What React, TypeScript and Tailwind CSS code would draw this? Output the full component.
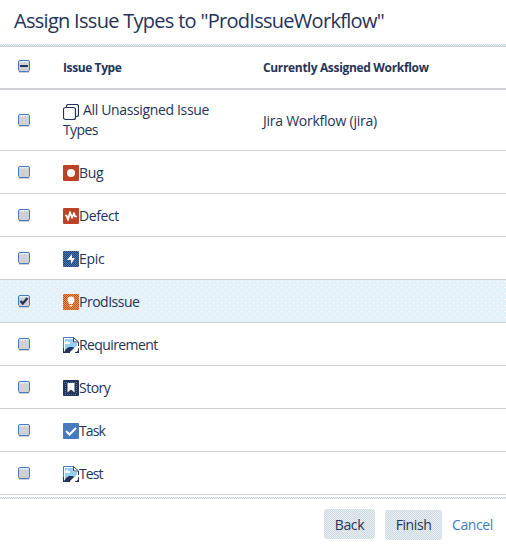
import type { ReactNode } from "react";

type CheckState = "off" | "on" | "mixed";

function Check({ state = "off" }: { state?: CheckState }) {
  return (
    <svg width="12" height="13" viewBox="0 0 12 13" className="block shrink-0" role="checkbox" aria-checked={state === "mixed" ? "mixed" : state === "on"}>
      <rect x="0.5" y="0.5" width="11" height="11" rx="1.5" fill="#cfd0d5" stroke="#467bbd" />
      <path d="M1.5 1.5h9M3 2.5h1M5 2.5h1M8 2.5h1" stroke="#e0f0f8" />
      <path d="M1 12.5h10" stroke="#cfd0d5" />
      <path d="M0 10.5h1M11 10.5h1" stroke="#e9a06a" />
      {state === "mixed" && <rect x="2" y="5" width="8" height="2" fill="#253358" />}
      {state === "on" && <path d="M2.5 6l2.3 2.5L9.5 3" fill="none" stroke="#253358" strokeWidth="2.4" />}
    </svg>
  );
}

function Tile({ fill, dots, children }: { fill: string; dots?: string; children: ReactNode }) {
  const id = "p" + fill.slice(1);
  return (
    <svg width="16" height="16" viewBox="0 0 16 16" className="block shrink-0">
      <defs>
        <pattern id={id} width="2" height="2" patternUnits="userSpaceOnUse">
          <rect width="2" height="2" fill={fill} />
          {dots && <path d="M0 0h1v1H0zM1 1h1v1H1z" fill={dots} />}
        </pattern>
      </defs>
      <rect width="16" height="16" rx="1" fill={dots ? `url(#${id})` : fill} />
      {children}
    </svg>
  );
}

const bug = <Tile fill="#bd4124"><circle cx="8" cy="8" r="4" fill="#fff" /></Tile>;
const defect = (
  <Tile fill="#be4225">
    <path d="M2 7.5h1.5L5 12l2-8 2 6 2-5 1 3.5h2" fill="none" stroke="#fff" strokeWidth="1.7" strokeLinejoin="round" />
  </Tile>
);
const epic = (
  <Tile fill="#253f70" dots="#467bbd"><path d="M9 3L4 9h4v4l4-6H9z" fill="#fff" /></Tile>
);
const prod = (
  <Tile fill="#c4501f" dots="#f0924c">
    <circle cx="8" cy="6" r="3.4" fill="#fff" />
    <path d="M6 8h4v2H6zM6.5 11h3v1h-1v1h-1v-1h-1z" fill="#fff" />
  </Tile>
);
const story = (
  <Tile fill="#253358">
    <path d="M1 2.5h14M2 14.5h12M2.5 4v10M13.5 4v10" stroke="#467bbd" strokeDasharray="1 1" />
    <path d="M4.5 3h7v9.5L8 9.5l-3.5 3z" fill="#fff" />
  </Tile>
);
const task = (
  <Tile fill="#467bbd"><path d="M3 8l3.5 3.5L13 5" fill="none" stroke="#fff" strokeWidth="2" /></Tile>
);
const broken = (
  <svg width="16" height="16" viewBox="0 0 16 16" className="block shrink-0">
    <path d="M0.5 0.5h10.5l4.5 4.5v10.5H0.5z" fill="#fff" />
    <path d="M2 2h8v4h4v3l-5 5H2z" fill="#94d0f3" />
    <path d="M2 7V5h1V4h2v1h2v2z" fill="#fff" />
    <path d="M1 15l2-3 3-2h4l1 1-4 4z" fill="#253358" />
    <path d="M0.5 16V0.5H11" fill="none" stroke="#467bbd" />
    <path d="M0.5 16v-5M0 15.5h7M15.5 10v6M12 15.5h4M15.5 5v4" fill="none" stroke="#253358" />
    <path d="M10.5 0.5v4.5h5z" fill="#fff" stroke="#34466f" />
    <path d="M8.5 15.5l7-6" stroke="#fff" strokeWidth="2.5" />
    <path d="M13 15.5h3v-3z" fill="#253358" />
  </svg>
);

const rows: { name: string; icon: ReactNode; checked?: boolean; tracking: string }[] = [
  { name: "Bug", icon: bug, tracking: "tracking-[-0.3px]" },
  { name: "Defect", icon: defect, tracking: "tracking-[-0.4px]" },
  { name: "Epic", icon: epic, tracking: "tracking-[-0.3px]" },
  { name: "ProdIssue", icon: prod, checked: true, tracking: "tracking-[-0.5px]" },
  { name: "Requirement", icon: broken, tracking: "tracking-[-0.6px]" },
  { name: "Story", icon: story, tracking: "tracking-[-0.5px]" },
  { name: "Task", icon: task, tracking: "tracking-[-0.9px]" },
  { name: "Test", icon: broken, tracking: "tracking-[-0.9px]" },
];

function Hatch({ height }: { height: string }) {
  return <div className={`${height} bg-[#dbe6ec] bg-[repeating-conic-gradient(#c9d2d9_0_25%,#e7f2f7_0_50%)] bg-size-[2px_2px]`} />;
}

export default function App() {
  return (
    <main className="h-[548px] w-[506px] overflow-hidden bg-white font-['Open_Sans','Noto_Sans',sans-serif] text-sm text-[#253358]">
      <h1 className="h-11 pt-[6px] pl-[14px] text-xl leading-[30px] tracking-[-0.71px] whitespace-nowrap">
        Assign Issue Types to "ProdIssueWorkflow"
      </h1>
      <Hatch height="h-[2px]" />
      <div className="h-px bg-[#cfd0d5]" />
      <div className="flex h-[43px] border-b-2 border-[#cfd0d5] pl-[18px] text-xs leading-[18px] font-bold">
        <div className="w-[45px] pt-[13px]"><Check state="mixed" /></div>
        <div className="w-[200px] pt-3 tracking-[-0.4px]">Issue Type</div>
        <div className="pt-3 tracking-[-0.33px]">Currently Assigned Workflow</div>
      </div>
      <div className="flex h-[61px] border-b border-[#cfd0d5] pl-[18px] leading-5">
        <div className="w-[45px] pt-6"><Check /></div>
        <div className="w-[200px] pt-[10px] tracking-[-0.35px]">
          <div className="flex h-5">
            <svg width="16" height="17" viewBox="0 0 16 17" className="mt-1 mr-1 shrink-0" fill="none" stroke="#253358" strokeWidth="1.2">
              <rect x="0.5" y="3.5" width="12" height="12" rx="2" />
              <path d="M3.5 3V2Q4 .5 5.5 .5h8q2 0 2 2v8q0 2-2 2h-1" />
            </svg>
            <span>All Unassigned Issue</span>
          </div>
          <div className="tracking-[-0.6px]">Types</div>
        </div>
        <div className="pt-[21px] tracking-[-0.25px]">Jira Workflow (jira)</div>
      </div>
      {rows.map((row) => (
        <div
          key={row.name}
          className={`flex h-[43px] border-b border-[#cfd0d5] pl-[18px] ${row.checked ? "bg-[#e4f1f8] bg-[radial-gradient(circle_at_1.5px_1.5px,#fff_0.5px,transparent_0.8px),radial-gradient(circle_at_5.5px_4.5px,#fff_0.5px,transparent_0.8px)] bg-size-[8px_6px]" : ""}`}
        >
          <div className="w-[45px] pt-[15px]"><Check state={row.checked ? "on" : "off"} /></div>
          <div className="pt-[14px]">{row.icon}</div>
          <span className={`pt-3 leading-5 ${row.tracking}`}>{row.name}</span>
        </div>
      ))}
      <div className="h-[2px]" />
      <Hatch height="h-[2px]" />
      <div className="flex justify-end pt-[10px] pr-[13px] leading-5">
        <button className="mr-[10px] h-[30px] w-[51px] rounded-[3px] bg-[#dbe6ec] bg-[repeating-conic-gradient(#d0d8de_0_25%,#e4f0f6_0_50%)] bg-size-[2px_2px] pt-px tracking-[-0.4px]">Back</button>
        <button className="mt-px mr-[10px] h-[30px] w-[57px] rounded-[3px] bg-[#dbe6ec] bg-[repeating-conic-gradient(#d0d8de_0_25%,#e4f0f6_0_50%)] bg-size-[2px_2px] tracking-[-0.4px]">Finish</button>
        <a className="w-[41px] pt-[6px] tracking-[-0.4px] text-[#467bbd]">Cancel</a>
      </div>
    </main>
  );
}
